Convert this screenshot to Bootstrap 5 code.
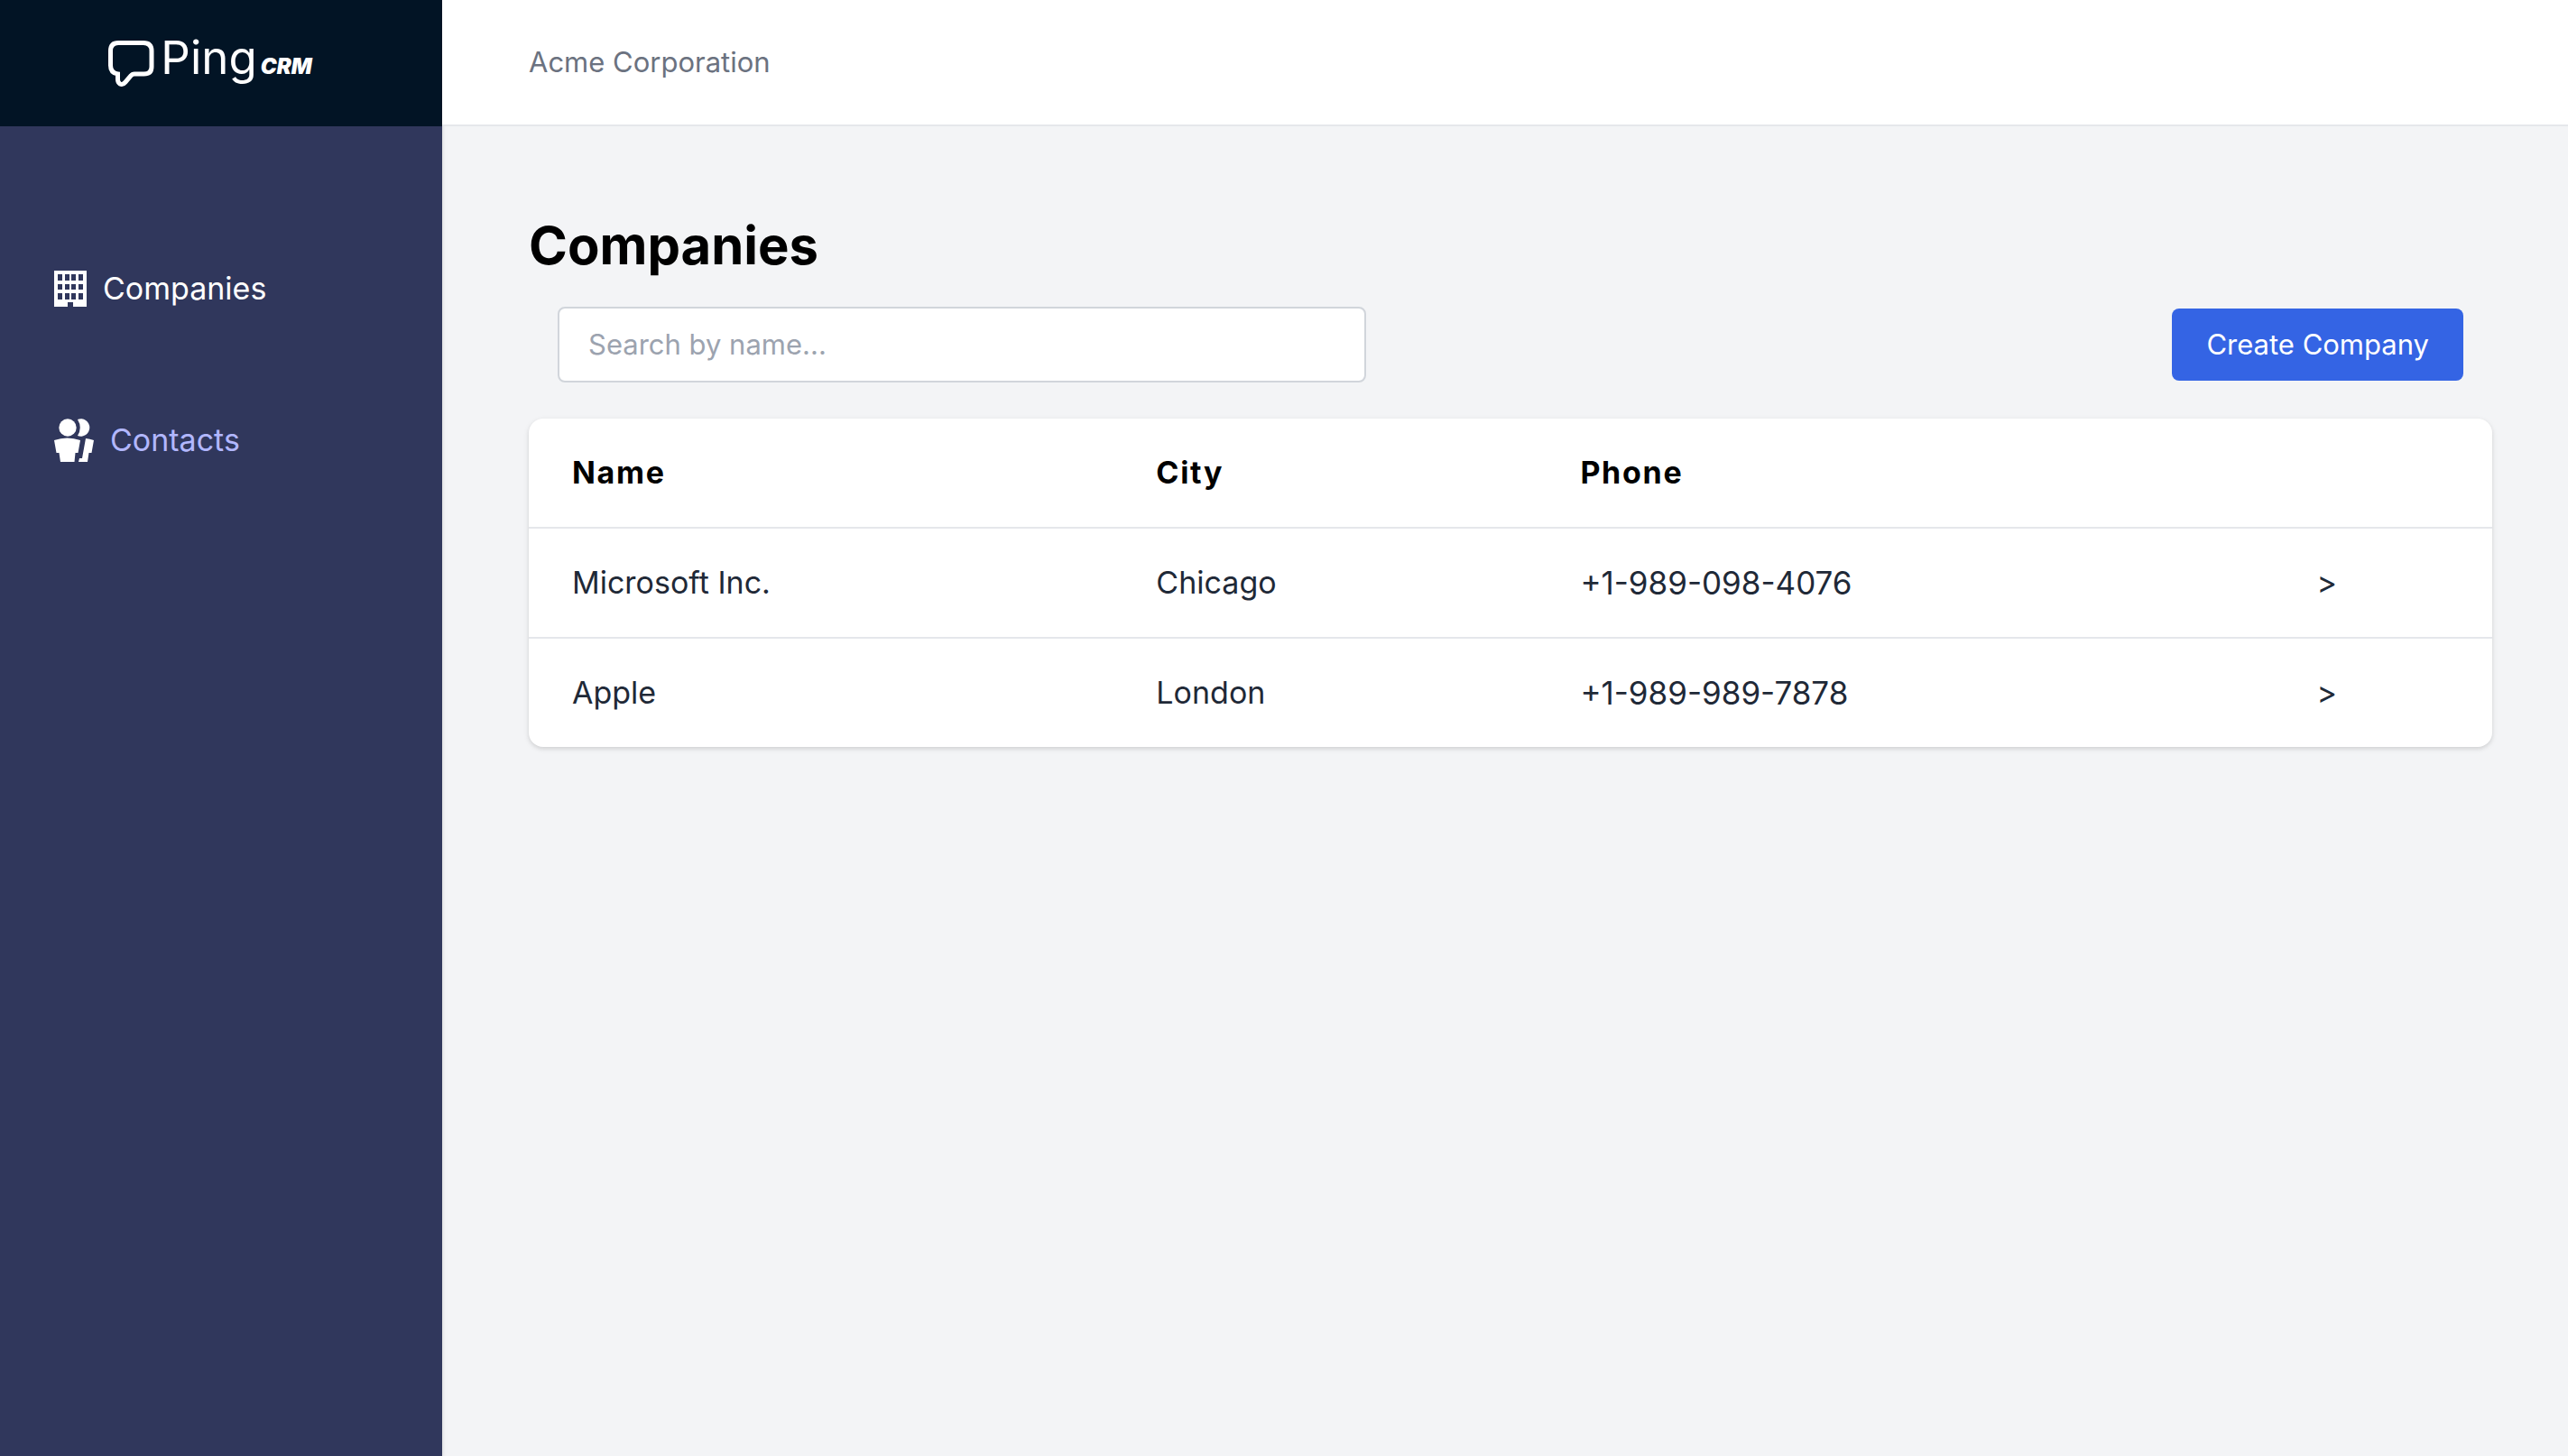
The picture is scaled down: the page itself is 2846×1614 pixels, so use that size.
<!DOCTYPE html>
<html lang="en">
<head>
<meta charset="utf-8">
<meta name="viewport" content="width=device-width, initial-scale=1">
<title>Companies - Ping CRM</title>
<link href="https://cdn.jsdelivr.net/npm/bootstrap@5.3.0/dist/css/bootstrap.min.css" rel="stylesheet">
<style>
  body { font-family: Inter, "Liberation Sans", sans-serif; font-size: 34px; line-height: 48px; color: #1f2937; background: #f3f4f6; }
  .sidebar { width: 490px; background: #30375c; box-shadow: 0 2px 6px rgba(0, 0, 0, .1), 0 2px 4px rgba(0, 0, 0, .06); }
  .brand { height: 140px; background: #021425; color: #fff; padding-right: 24px; }
  .brand:hover { color: #fff; }
  .brand-bubble { width: 52px; height: 52px; margin-right: 6px; }
  .brand-name { font-size: 51px; line-height: 60px; font-weight: 400; }
  .brand-tag { font-size: 24px; font-weight: 900; font-style: italic; margin-left: 4px; }
  .brand-words { padding-bottom: 8px; }
  .menu { padding: 144px 60px; gap: 96px; }
  .menu .nav-link { color: #b2b7ff; padding: 12px 0; line-height: 48px; gap: 18px; }
  .menu .nav-link.active { color: #fff; }
  .menu svg { fill: #fff; }
  .topbar { height: 140px; padding: 0 96px; background: #fff; border-bottom: 2px solid #e5e7eb; color: #6b7280; font-size: 31px; }
  .page { padding: 96px 84px 96px 96px; }
  .page-title { font-size: 58px; line-height: 72px; font-weight: 700; color: #000; margin: 0 0 32px; }
  .toolbar { padding: 0 32px; margin-bottom: 40px; }
  .search-box { width: 896px; padding: 16px 32px; border: 2px solid #d1d5db; border-radius: 8px; font-size: 31px; line-height: 48px; }
  .search-box::placeholder { color: #9ca3af; }
  .btn-create { background: #3464e4; color: #fff; font-size: 31px; line-height: 48px; padding: 16px 38px; border: 0; border-radius: 8px; }
  .btn-create:hover { background: #2a55c8; color: #fff; }
  .panel { background: #fff; border-radius: 16px; box-shadow: 0 2px 6px rgba(0, 0, 0, .1), 0 2px 4px rgba(0, 0, 0, .06); }
  .companies { --bs-table-bg: transparent; color: #1f2937; table-layout: fixed; }
  .companies > :not(caption) > * > * { padding: 36px 48px; border-bottom: 0; color: #1f2937; }
  .companies > tbody > tr > td { border-top: 2px solid #e5e7eb; }
  .companies > thead > tr > th { color: #000; font-weight: 700; letter-spacing: .05em; }
  .companies .phone-number { font-size: 35px; }
  .companies a { color: inherit; text-decoration: none; }
  .col-company { width: 29.75%; }
  .col-city { width: 21.6%; }
  .col-phone { width: 37.5%; }
</style>
<script src="https://cdn.jsdelivr.net/npm/bootstrap@5.3.0/dist/js/bootstrap.bundle.min.js"></script>
</head>
<body>
<div class="d-flex min-vh-100">
  <aside class="sidebar flex-shrink-0">
    <a href="#" class="brand d-flex align-items-center justify-content-center text-decoration-none">
      <svg class="brand-bubble" viewBox="0 0 52 52" fill="none" stroke="#fff" stroke-width="5" aria-hidden="true"><path d="M11 3.500H39Q48 3.500 48 12.500V30Q48 38 39.500 38H29Q26.500 38 25 40L19 47Q16 50.500 13 49Q10.500 47.500 10.500 44V38Q2.500 37 2.500 28.500V12.500Q2.500 3.500 11 3.500Z"/></svg>
      <span class="brand-words d-flex align-items-baseline"><span class="brand-name">Ping</span><span class="brand-tag">CRM</span></span>
    </a>
    <nav class="menu nav flex-column">
      <a href="#" class="nav-link active d-flex align-items-center">
        <svg width="36" height="40" viewBox="0 0 36 40" aria-hidden="true"><path fill-rule="evenodd" d="M0 0H36V40H21V35H15V40H0ZM4 4V11H9V4ZM12 4V11H17V4ZM19 4V11H24V4ZM27 4V11H32V4ZM4 15V21H9V15ZM12 15V21H17V15ZM19 15V21H24V15ZM27 15V21H32V15ZM4 25V32H9V25ZM12 25V32H17V25ZM19 25V32H24V25ZM27 25V32H32V25Z"/></svg>
        Companies
      </a>
      <a href="#" class="nav-link d-flex align-items-center">
        <svg width="44" height="48" viewBox="0 0 44 48" aria-hidden="true"><circle cx="15" cy="10" r="9.700"/><path d="M26 1A9.700 9.700 0 1 1 26 19Q31.500 10 26 1ZM0 24Q14.500 19 29 24L26.500 38H23.500L22.500 48H7L5.500 38H2.500ZM35 22Q39.500 22.500 44 24L41.500 38H38.500L37 48H27L28 44H31Z"/></svg>
        Contacts
      </a>
    </nav>
  </aside>
  <div class="flex-grow-1">
    <header class="topbar d-flex align-items-center">Acme Corporation</header>
    <main class="page">
      <h1 class="page-title">Companies</h1>
      <div class="toolbar d-flex align-items-center justify-content-between">
        <input type="search" class="search-box form-control" placeholder="Search by name..." aria-label="Search by name">
        <button type="button" class="btn btn-create">Create Company</button>
      </div>
      <div class="panel overflow-hidden">
        <table class="companies table mb-0">
          <thead>
            <tr><th class="col-company" scope="col">Name</th><th class="col-city" scope="col">City</th><th class="col-phone" scope="col">Phone</th><th></th></tr>
          </thead>
          <tbody>
            <tr><td>Microsoft Inc.</td><td>Chicago</td><td class="phone-number">+1-989-098-4076</td><td><a href="#" aria-label="Open Microsoft Inc.">&gt;</a></td></tr>
            <tr><td>Apple</td><td>London</td><td class="phone-number">+1-989-989-7878</td><td><a href="#" aria-label="Open Apple">&gt;</a></td></tr>
          </tbody>
        </table>
      </div>
    </main>
  </div>
</div>
</body>
</html>
